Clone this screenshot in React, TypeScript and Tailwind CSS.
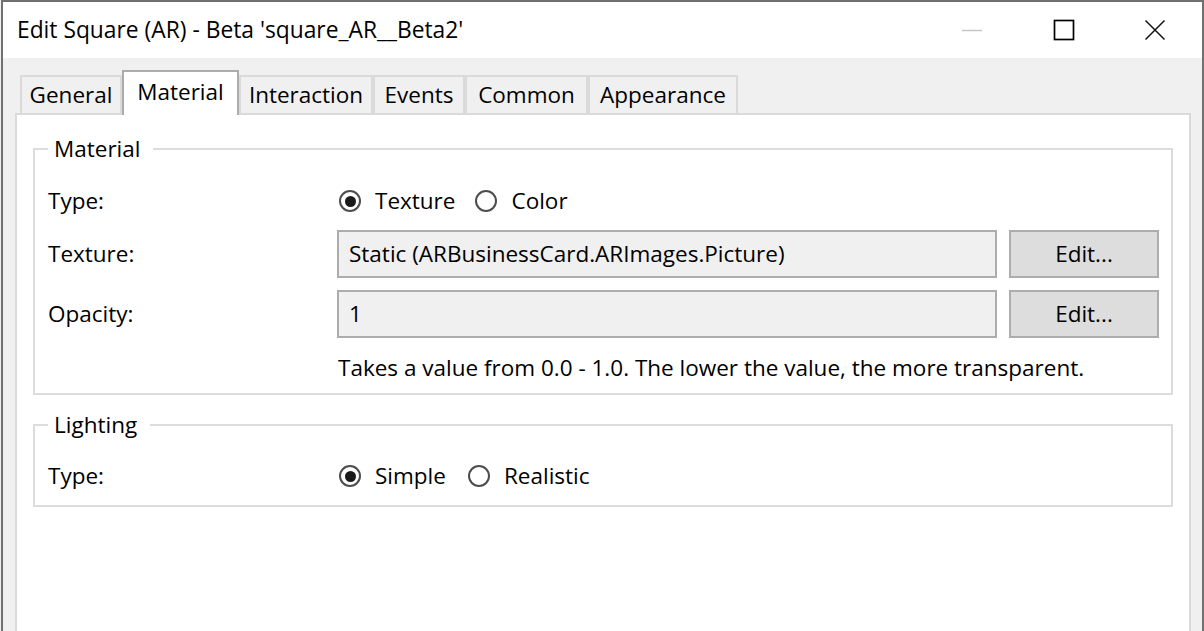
import React from "react";

const font = { fontFamily: '"Open Sans", "Noto Sans", sans-serif' };

function Radio({ checked, label, gapAfter }: { checked: boolean; label: string; gapAfter?: string }) {
  return (
    <div className={`flex items-center ${gapAfter ?? ""}`}>
      <div className="w-[22px] h-[22px] rounded-full border-2 border-[#4d4d4d] bg-white flex items-center justify-center shrink-0">
        {checked && <div className="w-[11px] h-[11px] rounded-full bg-[#1a1a1a]" />}
      </div>
      <span className="ml-[14px]">{label}</span>
    </div>
  );
}

function Tab({ label, w, selected }: { label: string; w: string; selected?: boolean }) {
  if (selected) {
    return (
      <div
        className={`${w} h-[45px] mb-[-2px] relative z-10 bg-white border-2 border-b-0 border-[#acacac] flex items-start justify-center pt-[3px]`}
      >
        {label}
      </div>
    );
  }
  return (
    <div
      className={`${w} h-[38px] bg-[#f0f0f0] border-2 border-b-0 border-[#dadada] flex items-center justify-center`}
    >
      {label}
    </div>
  );
}

export default function App() {
  return (
    <div
      className="w-[1204px] h-[631px] overflow-hidden bg-[#f0f0f0] pl-px text-black text-[22.5px]"
      style={font}
    >
      <div className="h-[640px] flex flex-col border-l-2 border-r-2 border-t-2 border-[#707070]">
        {/* Title bar */}
        <div className="h-[56px] bg-white flex items-center shrink-0">
          <div className="pl-[14px] flex-1 text-[22.8px] leading-none pt-[1px]">
            Edit Square (AR) - Beta 'square_AR__Beta2'
          </div>
          <div className="flex items-center h-full">
            <div className="w-[92px] h-full flex items-center justify-center">
              <svg width="22" height="22" viewBox="0 0 22 22">
                <line x1="1" y1="11.5" x2="21" y2="11.5" stroke="#c6c6c6" strokeWidth="1.5" />
              </svg>
            </div>
            <div className="w-[92px] h-full flex items-center justify-center">
              <svg width="22" height="22" viewBox="0 0 22 22">
                <rect x="1.5" y="1.5" width="19" height="19" fill="none" stroke="#000" strokeWidth="1.7" />
              </svg>
            </div>
            <div className="w-[92px] h-full flex items-center justify-center pr-[3px]">
              <svg width="22" height="22" viewBox="0 0 22 22">
                <path d="M1.5 1.5 L20.5 20.5 M20.5 1.5 L1.5 20.5" stroke="#111" strokeWidth="1.5" fill="none" />
              </svg>
            </div>
          </div>
        </div>

        {/* Body */}
        <div className="flex-1 flex flex-col bg-[#f0f0f0]">
          <div className="h-[55px] pt-[12px] pl-[17px] flex items-end shrink-0">
            <Tab label="General" w="w-[102px]" />
            <Tab label="Material" w="w-[117px]" selected />
            <Tab label="Interaction" w="w-[134px]" />
            <Tab label="Events" w="w-[92px]" />
            <Tab label="Common" w="w-[123px]" />
            <Tab label="Appearance" w="w-[150px]" />
          </div>

          <div className="flex-1 ml-[12px] mr-[11px] border-2 border-[#dadada] bg-white px-[16px] pt-[20px]">
            {/* Material group */}
            <fieldset className="border-2 border-[#dcdcdc] px-[13px] pb-[11px] pr-[12px]">
              <legend className="pl-[6px] pr-[13px] leading-[28px]">Material</legend>
              <div className="mt-[18px] h-[40px] flex items-center">
                <div className="w-[289px]">Type:</div>
                <div className="flex items-center pl-[2px]">
                  <Radio checked label="Texture" gapAfter="mr-[20px]" />
                  <Radio checked={false} label="Color" />
                </div>
              </div>
              <div className="mt-[9px] h-[48px] flex items-center">
                <div className="w-[289px]">Texture:</div>
                <div className="flex-1 h-full border-2 border-[#adadad] bg-[#f0f0f0] flex items-center pl-[10px]">
                  Static (ARBusinessCard.ARImages.Picture)
                </div>
                <div className="ml-[12px] w-[150px] h-full border-2 border-[#adadad] bg-[#dddddd] flex items-center justify-center">
                  Edit...
                </div>
              </div>
              <div className="mt-[12px] h-[48px] flex items-center">
                <div className="w-[289px]">Opacity:</div>
                <div className="flex-1 h-full border-2 border-[#adadad] bg-[#f0f0f0] flex items-center pl-[10px]">
                  1
                </div>
                <div className="ml-[12px] w-[150px] h-full border-2 border-[#adadad] bg-[#dddddd] flex items-center justify-center">
                  Edit...
                </div>
              </div>
              <div className="mt-[16px] h-[28px] leading-[28px] pl-[290px]">
                Takes a value from 0.0 - 1.0. The lower the value, the more transparent.
              </div>
            </fieldset>

            {/* Lighting group */}
            <fieldset className="mt-[16px] border-2 border-[#dcdcdc] px-[13px] pb-[9px] pr-[12px]">
              <legend className="pl-[6px] pr-[13px] leading-[28px]">Lighting</legend>
              <div className="mt-[17px] h-[40px] flex items-center">
                <div className="w-[289px]">Type:</div>
                <div className="flex items-center pl-[2px]">
                  <Radio checked label="Simple" gapAfter="mr-[22px]" />
                  <Radio checked={false} label="Realistic" />
                </div>
              </div>
            </fieldset>
          </div>
        </div>
      </div>
    </div>
  );
}
